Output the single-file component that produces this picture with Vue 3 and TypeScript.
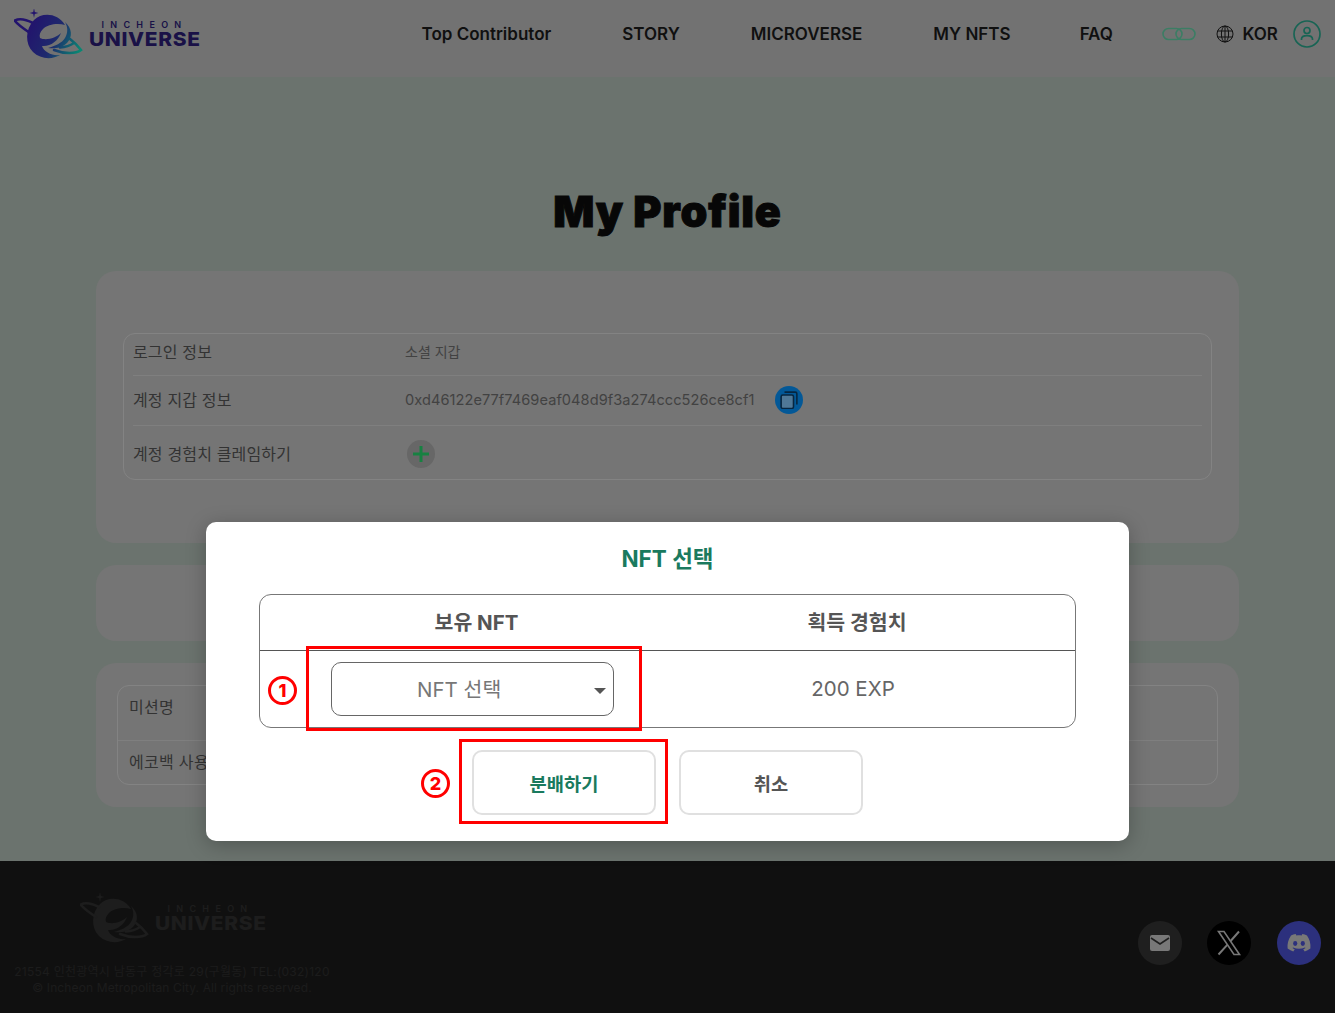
<script setup lang="ts">
const navItems: string[] = ['Top Contributor', 'STORY', 'MICROVERSE', 'MY NFTS', 'FAQ']
const planetFills: string[] = [
  'M65 25 C58 23 48 24 43 29 C40 32 39 35 40 38 C46 41 56 38 61 33 C58 41 50 47 42 46 C44 52 52 56 60 55 C52 60 40 59 33 52 C25 44 25 29 34 20 C42 12 58 13 65 25 Z',
  'M65 22 C72 28 73 37 67 43 C62 48 54 49 48 48 C55 46 62 43 65 38 C68 33 68 27 65 22 Z',
  'M34 8 L34.800 12 L38.500 13 L34.800 14 L34 18 L33.200 14 L29.500 13 L33.200 12 Z',
]
const ringStrokes: string[] = [
  'M15 20.500 C20 18 27 20 33 23',
  'M15 21 C18 25 24 29 30 33',
  'M54 50 C64 54 76 54 81 50 C78 46 74 42 70 39',
  'M60 47.500 C66 47 71 45 74 43',
]
</script>

<template>
  <div class="page">
    <header class="header">
      <div class="logo">
        <svg class="planet" viewBox="0 0 70 52" width="70" height="52" aria-hidden="true">
          <defs>
            <linearGradient id="lg" gradientUnits="userSpaceOnUse" x1="30" y1="25" x2="80" y2="50">
              <stop offset="0" stop-color="#361fa8" />
              <stop offset=".5" stop-color="#2f3fa8" />
              <stop offset="1" stop-color="#0fd0b1" />
            </linearGradient>
          </defs>
          <g transform="translate(-14 -9)">
            <path v-for="d in planetFills" :key="d" :d="d" fill="url(#lg)" />
            <path v-for="d in ringStrokes" :key="d" :d="d" fill="none" stroke="url(#lg)" stroke-width="2.600" stroke-linecap="round" />
          </g>
        </svg>
        <div class="wordmark">
          <span class="wm-top">INCHEON</span>
          <span class="wm-main">UNIVERSE</span>
        </div>
      </div>
      <nav class="nav">
        <a v-for="item in navItems" :key="item" class="nav-item">{{ item }}</a>
      </nav>
      <div class="tools">
        <svg width="34" height="14" viewBox="0 0 34 14" fill="none" stroke="#5cc09a" stroke-width="1.600" aria-hidden="true">
          <rect x="1" y="1.500" width="19" height="11" rx="5.500" />
          <rect x="14" y="1.500" width="19" height="11" rx="5.500" />
        </svg>
        <div class="lang">
          <svg width="18" height="18" viewBox="0 0 18 18" fill="none" stroke="#1a1a1a" stroke-width="1" aria-hidden="true">
            <circle cx="9" cy="9" r="8" />
            <ellipse cx="9" cy="9" rx="3.600" ry="8" />
            <path d="M9 1V17M1.600 6H16.400M1.600 12H16.400" />
          </svg>
          <span>KOR</span>
        </div>
        <svg width="28" height="28" viewBox="0 0 28 28" fill="none" stroke="#269a82" stroke-width="1.700" aria-hidden="true">
          <circle cx="14" cy="14" r="13" />
          <circle cx="14" cy="10.500" r="3" />
          <path d="M8.500 20 V19 C8.500 16.500 11 15.600 14 15.600 C17 15.600 19.500 16.500 19.500 19 V20" />
        </svg>
      </div>
    </header>

    <main class="main">
      <h1 class="title">My Profile</h1>
      <section class="card card-profile">
        <div class="info-table">
          <div class="info-row row-a">
            <span class="label">로그인 정보</span>
            <span class="value small">소셜 지갑</span>
          </div>
          <div class="info-row row-b">
            <span class="label">계정 지갑 정보</span>
            <span class="value">0xd46122e77f7469eaf048d9f3a274ccc526ce8cf1</span>
            <span class="copy">
              <svg width="18" height="18" viewBox="0 0 16 16" fill="none" stroke="#0b3b63" stroke-width="1.400" aria-hidden="true">
                <rect x="1" y="3.500" width="11" height="12" rx="1.500" fill="#7ab8e8" />
                <path d="M4 1H13.500C14.500 1 15 1.600 15 2.500V12" />
              </svg>
            </span>
          </div>
          <div class="info-row row-c">
            <span class="label">계정 경험치 클레임하기</span>
            <span class="plus">
              <svg width="16" height="16" viewBox="0 0 16 16" stroke="#26c766" stroke-width="3" aria-hidden="true">
                <path d="M8 0V16M0 8H16" />
              </svg>
            </span>
          </div>
        </div>
      </section>
      <section class="card card-empty"></section>
      <section class="card card-mission">
        <div class="mission-table">
          <div class="mission-row first">미션명</div>
          <div class="mission-row">에코백 사용 인증</div>
        </div>
      </section>
    </main>

    <footer class="footer">
      <div class="foot-left">
        <div class="logo foot-logo">
          <svg class="planet" viewBox="0 0 70 52" width="70" height="52" aria-hidden="true">
            <g transform="translate(-14 -9)">
              <path v-for="d in planetFills" :key="d" :d="d" fill="#2d2d2d" />
              <path v-for="d in ringStrokes" :key="d" :d="d" fill="none" stroke="#2d2d2d" stroke-width="2.600" stroke-linecap="round" />
            </g>
          </svg>
          <div class="wordmark">
            <span class="wm-top">INCHEON</span>
            <span class="wm-main">UNIVERSE</span>
          </div>
        </div>
        <p class="foot-text">21554 인천광역시 남동구 정각로 29(구월동) TEL:(032)120</p>
        <p class="foot-text second">© Incheon Metropolitan City. All rights reserved.</p>
      </div>
      <div class="socials">
        <span class="social s-mail">
          <svg width="20" height="16" viewBox="0 0 20 16" aria-hidden="true">
            <rect width="20" height="16" rx="2" fill="#b8b8b8" />
            <path d="M1 3 L10 9 L19 3" fill="none" stroke="#313131" stroke-width="1.600" />
          </svg>
        </span>
        <span class="social s-x">
          <svg width="26" height="26" viewBox="0 0 26 26" fill="none" stroke="#b8b8b8" aria-hidden="true">
            <path d="M2.500 1.500H8L23.500 24.500H18Z" stroke-width="1.600" />
            <path d="M23 1.500L14.200 11.500M11.500 14.600L2.500 24.500" stroke-width="2" />
          </svg>
        </span>
        <span class="social s-discord">
          <svg width="24" height="18" viewBox="0 0 24 18" aria-hidden="true">
            <path fill="#b8b8b8" d="M20 1.600C18.500.9 17 .4 15.300.1L14.600 1.500C12.900 1.300 11.100 1.300 9.400 1.500L8.700.1C7 .4 5.500.9 4 1.600 1 6 .2 10.300.6 14.600 2.500 16 4.400 16.900 6.300 17.500L7.800 15.200C7 14.900 6.200 14.500 5.500 14L6.100 13.500C9.900 15.200 14.100 15.200 17.900 13.500L18.500 14C17.800 14.500 17 14.900 16.200 15.200L17.700 17.500C19.600 16.900 21.500 16 23.400 14.600 23.900 9.600 22.600 5.300 20 1.600Z" />
            <ellipse cx="8.200" cy="9.500" rx="2.100" ry="2.400" fill="#444ac0" />
            <ellipse cx="15.800" cy="9.500" rx="2.100" ry="2.400" fill="#444ac0" />
          </svg>
        </span>
      </div>
    </footer>

    <div class="overlay">
      <div class="modal">
        <h2 class="modal-title">NFT 선택</h2>
        <div class="nft-table">
          <div class="nft-head">
            <span class="head-left">보유 NFT</span>
            <span class="head-right">획득 경험치</span>
          </div>
          <div class="nft-body">
            <div class="select">
              <span>NFT 선택</span>
              <i class="caret"></i>
            </div>
            <span class="exp">200 EXP</span>
          </div>
        </div>
        <div class="actions">
          <button class="btn primary" type="button">분배하기</button>
          <button class="btn" type="button">취소</button>
        </div>
        <span class="mark box-one"></span>
        <span class="mark box-two"></span>
        <span class="step step-one">1</span>
        <span class="step step-two">2</span>
      </div>
    </div>
  </div>
</template>

<style>
html, body { margin: 0; background: #1a1a1a; }
</style>

<style scoped>
.page {
  position: relative;
  width: 1335px;
  height: 1013px;
  overflow: hidden;
  font-family: Inter, "Noto Sans CJK KR", sans-serif;
  color: #1a1a1a;
}
.header {
  height: 77px;
  background: #b0b0b0;
  display: flex;
  align-items: center;
  padding: 0 14px 10px;
  box-sizing: border-box;
}
.logo { display: flex; align-items: flex-start; width: 186px; height: 49px; }
.planet { flex: none; }
.wordmark { display: flex; flex-direction: column; align-items: center; margin-left: 5px; margin-top: 11px; width: 112px; }
.wm-top { font-size: 9px; font-weight: 600; letter-spacing: 6.300px; line-height: 10px; color: #281b6e; white-space: nowrap; }
.wm-main { margin-top: 1px; font-size: 19px; font-weight: 800; line-height: 18px; letter-spacing: .6px; color: #281b6e; white-space: nowrap; transform: scaleX(1.100); }
.nav { display: flex; gap: 71px; margin-left: 221.500px; }
.nav-item { font-size: 17px; font-weight: 600; line-height: 24px; white-space: nowrap; }
.nav-item:last-child { margin-left: -2px; }
.tools { display: flex; align-items: center; margin-left: 49.500px; }
.lang { display: flex; align-items: center; gap: 8px; margin-left: 20px; margin-right: 15px; font-size: 17px; font-weight: 600; }
.main {
  height: 784px;
  background: #a5b1a9;
  padding: 107px 96px 0;
  box-sizing: border-box;
}
.title {
  margin: 0 0 33px;
  text-align: center;
  font-size: 43px;
  font-weight: 900;
  line-height: 54px;
  letter-spacing: .8px;
  color: #0c0c0c;
  -webkit-text-stroke: 1px #0c0c0c;
}
.card { background: #b4b4b4; border-radius: 20px; margin-bottom: 22px; box-sizing: border-box; }
.card-profile { height: 272px; padding: 62px 27px 0; }
.card-empty { height: 76px; }
.card-mission { height: 144px; padding: 22px 21px 0; }
.info-table { height: 147px; border: 1px solid #cacaca; border-radius: 12px; padding: 0 9px; box-sizing: border-box; }
.info-row { display: flex; align-items: center; border-bottom: 1px solid #c4c4c4; box-sizing: border-box; }
.row-a { height: 42px; padding-bottom: 5px; }
.row-b { height: 50px; padding-bottom: 2px; }
.row-c { height: 53px; padding-top: 2px; border-bottom: 0; }
.label { width: 272px; font-size: 16px; letter-spacing: .15px; color: #4f4f4f; line-height: 22px; flex: none; }
.value { font-size: 14.600px; color: #666; letter-spacing: .05px; white-space: nowrap; }
.value.small { font-size: 14px; letter-spacing: 0; position: relative; top: -1px; }
.copy { width: 28px; height: 28px; margin-left: 21px; border-radius: 50%; background: #0688e8; display: flex; align-items: center; justify-content: center; }
.plus { width: 28px; height: 28px; margin-left: 2px; border-radius: 50%; background: #9e9e9e; display: flex; align-items: center; justify-content: center; }
.mission-table { height: 100px; border: 1px solid #cacaca; border-radius: 12px; box-sizing: border-box; }
.mission-row { height: 44px; padding: 10px 11px 0; box-sizing: border-box; font-size: 16px; letter-spacing: .3px; line-height: 22px; color: #4f4f4f; }
.mission-row.first { height: 55px; border-bottom: 1px solid #c4c4c4; }
.footer {
  height: 152px;
  background: #1a1a1a;
  display: flex;
  justify-content: space-between;
  padding: 32px 14px 0;
  box-sizing: border-box;
}
.foot-left { display: flex; flex-direction: column; align-items: center; width: 316px; }
.foot-logo { margin-left: 2px; height: 71px; flex: none; }
.foot-logo .wm-top, .foot-logo .wm-main { color: #2d2d2d; }
.foot-text { margin: 0; font-size: 12px; line-height: 16px; letter-spacing: .25px; color: #2b2b2b; white-space: nowrap; }
.foot-text.second { letter-spacing: .12px; }
.socials { display: flex; gap: 25px; margin-top: 28px; height: 44px; }
.social { width: 44px; height: 44px; border-radius: 50%; display: flex; align-items: center; justify-content: center; }
.s-mail { background: #313131; }
.s-x { background: #000; }
.s-discord { background: #444ac0; margin-left: 1px; }
.overlay {
  position: absolute;
  inset: 0;
  background: rgba(0, 0, 0, .35);
  display: flex;
  justify-content: center;
  align-items: flex-start;
  padding-top: 522px;
  box-sizing: border-box;
}
.modal {
  position: relative;
  width: 923px;
  height: 319px;
  background: #fff;
  border-radius: 10px;
  box-shadow: 0 4px 20px rgba(0, 0, 0, .25);
  padding: 20px 53px 0;
  box-sizing: border-box;
}
.modal-title { margin: 0 0 19px; text-align: center; font-size: 22.500px; font-weight: 700; line-height: 33px; color: #1a7a5e; }
.nft-table { height: 134px; border: 1px solid #777; border-radius: 12px; box-sizing: border-box; }
.nft-head { height: 56px; padding-bottom: 4px; border-bottom: 1px solid #555; display: flex; align-items: center; box-sizing: border-box; font-size: 20.500px; font-weight: 700; color: #555; }
.head-left { width: 433px; text-align: center; }
.head-right { width: 328px; text-align: center; }
.nft-body { display: flex; align-items: center; height: 76px; padding-left: 71px; }
.select {
  position: relative;
  width: 283px;
  height: 54px;
  border: 1px solid #666;
  border-radius: 10px;
  box-sizing: border-box;
  display: flex;
  align-items: center;
  padding: 0 0 2px 85px;
  font-size: 20.500px;
  color: #777;
}
.caret { position: absolute; right: 7px; top: 25px; border: 6px solid transparent; border-top-color: #555; border-bottom: 0; }
.exp { flex: 1; text-align: center; padding: 0 0 2px 17px; font-size: 20.500px; color: #666; }
.actions { display: flex; justify-content: center; gap: 23px; margin-top: 22px; }
.btn {
  width: 184px;
  height: 65px;
  background: #fff;
  border: 2.500px solid #e0e0e0;
  border-radius: 10px;
  font-family: inherit;
  font-size: 18.700px;
  font-weight: 700;
  color: #555;
}
.btn.primary { color: #1a7a5e; }
.mark { position: absolute; border: 3px solid #f00; box-sizing: border-box; }
.box-one { left: 100px; top: 124px; width: 336px; height: 85px; }
.box-two { left: 253px; top: 217px; width: 209px; height: 85px; }
.step {
  position: absolute;
  width: 29px;
  height: 29px;
  border: 3px solid #f00;
  border-radius: 50%;
  box-sizing: border-box;
  display: flex;
  align-items: center;
  justify-content: center;
  color: #f00;
  font-size: 18px;
  font-weight: 800;
}
.step-one { left: 62px; top: 154px; }
.step-two { left: 215px; top: 247px; }
</style>
